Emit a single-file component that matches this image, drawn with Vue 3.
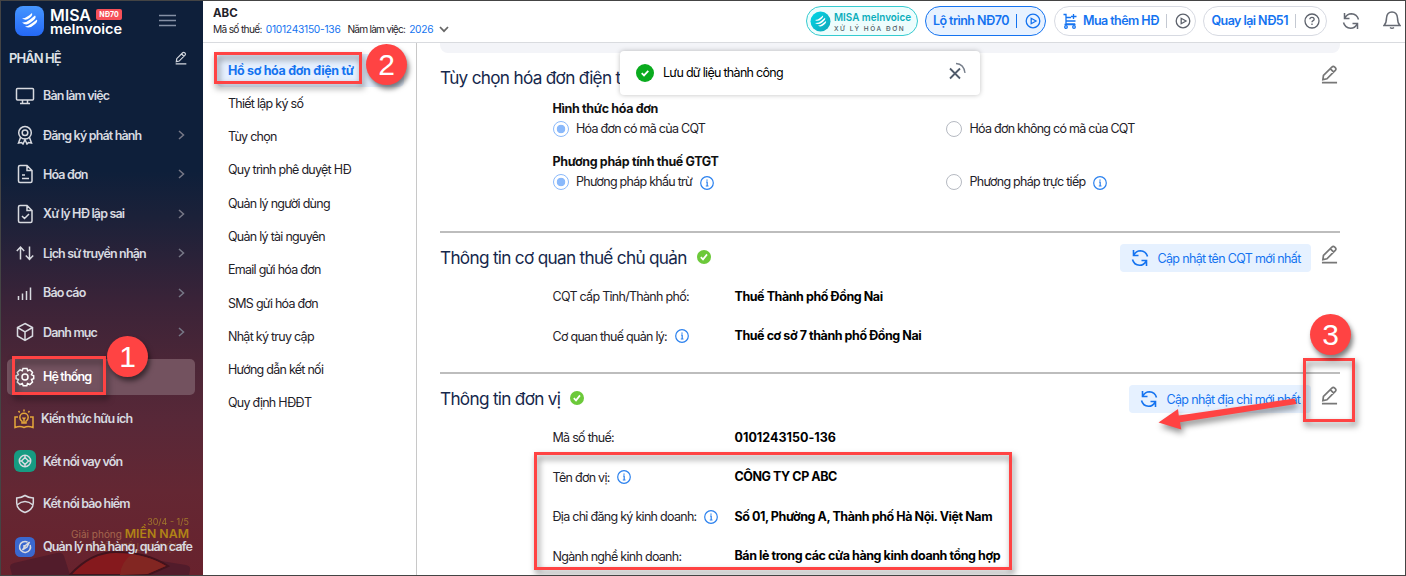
<template>
  <div class="app">
    <!-- Menu bên trái -->
    <aside class="sidebar">
      <div class="festival">
        <svg class="festival-art" width="202" height="30" viewBox="0 0 202 30">
          <path d="M11 30 L9 22 Q9 19 13 18 L56 8 Q61 7 63 11 L69 30 Z M160 16 L185 20 Q190 21 189 25 L188 30 H150 Z" fill="#521c2b" />
          <path d="M69 30 Q90 7 115 7 Q145 7 167 21 L147 30 Z" fill="#85191d" stroke="#42131d" stroke-width="2" />
          <path d="M119 30 Q120 17 131 9 Q150 12 165 21 L146 29 Z" fill="#822622" />
        </svg>
        <span class="fest-date">30/4 - 1/5</span>
        <span class="fest-main">Giải phóng <b>MIỀN NAM</b></span>
        <span class="fest-sub">QUỐC TẾ LAO ĐỘNG</span>
      </div>

      <div class="brand">
        <svg width="29" height="30" viewBox="0 0 29 30">
          <defs>
            <linearGradient id="brandBg" x1="0" y1="0" x2="0" y2="1">
              <stop offset="0" stop-color="#4596ff" />
              <stop offset="1" stop-color="#2468f6" />
            </linearGradient>
          </defs>
          <rect width="29" height="30" rx="8" fill="url(#brandBg)" />
          <path d="M7 12.5 Q10 12.500 14 9.500 L17 7 Q18 9.500 14.500 12 Q11 15 7 12.500 Z M7 16.500 Q11 17 15 13.500 L20 9.500 Q22 11.500 18 14.800 L15 17 Q11 20 7 16.500 Z M10 20.500 Q13 20.500 17 17.300 L22 13.500 Q23 16 19.500 18.500 Q15 23 10 20.500 Z" fill="#fff" />
        </svg>
        <svg class="brand-text" width="74" height="34" viewBox="0 0 74 34">
          <text x="0" y="15" font-size="16" textLength="41" lengthAdjust="spacingAndGlyphs">MISA</text>
          <text x="0" y="28" font-size="13.5" textLength="72" lengthAdjust="spacingAndGlyphs">meInvoice</text>
        </svg>
        <span class="brand-badge">NĐ70</span>
        <svg class="burger" width="17" height="13" viewBox="0 0 17 13">
          <path d="M0 1.500h17M0 6.500h17M0 11.500h17" stroke="#8590a5" stroke-width="1.500" />
        </svg>
      </div>

      <div class="side-title">
        <span>PHÂN HỆ</span>
        <svg width="12" height="14" viewBox="0 0 18 20" fill="none" stroke="#d5d9e0" stroke-width="1.800">
          <path :d="pencil" />
        </svg>
      </div>

      <div
        v-for="item in mainMenu"
        :key="item.text"
        :class="['side-item', { current: item.current }]"
      >
        <svg class="side-icon" width="20" height="20" viewBox="0 0 20 20">
          <path v-for="d in item.icon" :key="d" :d="d" />
        </svg>
        <span class="side-text">{{ item.text }}</span>
        <svg v-if="item.arrow" class="side-arrow" width="7" height="10" viewBox="0 0 7 10">
          <path d="M1 1l4.500 4L1 9" />
        </svg>
      </div>

      <div class="side-item extra">
        <svg class="side-icon gold" width="20" height="20" viewBox="0 0 20 20">
          <path d="M8 14v-1.700Q5.800 11 5.800 8.500a4.200 4.200 0 0 1 8.400 0q0 2.500-2.200 3.800V14zM8.500 8.500L10 10l1.500-1.500M10 10v4M10 .5V2.500M4.500 2l1.200 1.500M15.500 2l-1.200 1.500M4 8H1v10.500q5-1.800 9 0 4-1.800 9 0V8h-3" />
        </svg>
        <span class="side-text shift">Kiến thức hữu ích</span>
      </div>
      <div class="side-item extra">
        <svg class="side-icon wide" width="22" height="22" viewBox="0 0 22 22">
          <rect width="22" height="22" rx="6" fill="#169b82" stroke="none" />
          <circle cx="11" cy="11" r="5.700" />
          <path d="M11 7.500l3.500 3.500-3.500 3.500L7.500 11zM11 5.300v2.200M11 14.500v2.200M5.300 11h2.200M14.500 11h2.200" />
        </svg>
        <span class="side-text">Kết nối vay vốn</span>
      </div>
      <div class="side-item extra">
        <svg class="side-icon" width="20" height="20" viewBox="0 0 20 20">
          <path d="M10 1.500q4 2.600 8.300 2.600v5q0 6.500-8.300 9.400-8.300-2.900-8.300-9.400v-5q4.300 0 8.300-2.600zM2 11q4-3.500 8-3.500t8 3.500" />
        </svg>
        <span class="side-text">Kết nối bảo hiểm</span>
      </div>
      <div class="side-item extra">
        <svg class="side-icon" width="20" height="20" viewBox="0 0 20 20">
          <rect width="20" height="20" rx="5.500" fill="#3a68cf" stroke="none" />
          <path d="M12.500 5a5.500 5.500 0 1 0 2.700 3M7.500 13l3-4.500 4-3.500-2.500 5zM9 8v3" />
        </svg>
        <span class="side-text">Quản lý nhà hàng, quán cafe</span>
      </div>
    </aside>

    <div class="page">
      <!-- Thanh trên cùng -->
      <header class="topbar">
        <div class="company">
          <b>ABC</b>
          <div class="company-info">
            <span>Mã số thuế:</span><span class="blue">0101243150-136</span>
            <span class="year">Năm làm việc:</span><span class="blue">2026</span>
            <svg width="10" height="7" viewBox="0 0 10 7"><path d="M1 1l4 4.200L9 1" fill="none" stroke="#666" stroke-width="1.700" /></svg>
          </div>
        </div>
        <div class="tools">
          <div class="pill pill-logo">
            <svg width="112" height="29" viewBox="0 0 112 29">
              <defs>
                <linearGradient id="miniBg" x1="0" y1="0" x2="1" y2="1">
                  <stop offset="0" stop-color="#00d8e8" />
                  <stop offset="1" stop-color="#13a5b8" />
                </linearGradient>
              </defs>
              <circle cx="14.500" cy="14.500" r="10" fill="url(#miniBg)" />
              <path d="M9 13q3 0 5-2l3-2.500q.7 1.500-2 3.800-3 2.700-6 .7zM9 16q4 .3 6.500-2.300l3.500-2.900q1 1.700-2.500 4.400Q12 18.500 9 16zM12 18.800q3-.5 4.500-2l3.500-2.800q.7 1.500-2 3.800-3 2.700-6 1z" fill="#fff" />
              <text x="28" y="14.200" class="mini-name" textLength="77" lengthAdjust="spacingAndGlyphs">MISA meInvoice</text>
              <text x="28" y="23.500" class="mini-sub" textLength="69">XỬ LÝ HÓA ĐƠN</text>
            </svg>
          </div>
          <div class="pill pill-route">
            <span>Lộ trình NĐ70</span><i></i>
            <svg width="16" height="16" viewBox="0 0 16 16"><circle cx="8" cy="8" r="6.800" /><path d="M6.200 5.300v5.400L11 8z" /></svg>
          </div>
          <div class="pill pill-buy">
            <svg class="cart" width="15" height="16" viewBox="0 0 15 16">
              <path d="M.5 1.500H3v9.500h9M3 4.500h5M3 8h9.500M10.500 1v5M8 3.500h5.500M1.500 11.500h11" />
              <circle cx="3" cy="14" r="1.300" /><circle cx="11" cy="14" r="1.300" />
            </svg>
            <span>Mua thêm HĐ</span><i></i>
            <svg class="grey" width="16" height="16" viewBox="0 0 16 16"><circle cx="8" cy="8" r="6.800" /><path d="M6.200 5.300v5.400L11 8z" /></svg>
          </div>
          <div class="pill pill-back">
            <span>Quay lại NĐ51</span><i></i>
            <svg class="grey" width="16" height="16" viewBox="0 0 16 16"><circle cx="8" cy="8" r="7" /><path d="M5.800 6.300q.2-2 2.200-2t2.200 1.800q0 1.200-1.300 1.800-.9.500-.9 1.400M8 10.500v1.400" /></svg>
          </div>
          <svg class="tool-icon" width="18" height="18" viewBox="0 0 18 18"><path :d="refresh" /></svg>
          <svg class="tool-icon bell" width="18" height="19" viewBox="0 0 18 19">
            <path d="M1 14.500q2.500-2.500 2.500-7.500Q4 1 9 1t5.500 6q0 5 2.500 7.500zM7 16.500q2 1.600 4 0" />
          </svg>
        </div>
      </header>

      <div class="body">
        <nav class="subnav">
          <div
            v-for="(name, i) in subMenu"
            :key="name"
            :class="['sub-item', { active: i === 0 }]"
          >{{ name }}</div>
        </nav>

        <main class="content">
          <div class="grey-strip"></div>

          <section class="options">
            <div class="sec-head">
              <h2>Tùy chọn hóa đơn điện tử</h2>
              <svg class="edit" width="17" height="19" viewBox="0 0 18 20"><path :d="pencil" /></svg>
            </div>
            <div v-for="g in groups" :key="g.title" class="group">
              <b>{{ g.title }}</b>
              <div class="radios">
                <label v-for="(o, i) in g.options" :key="o.text">
                  <span :class="['radio', { checked: i === 0 }]"></span>
                  <span>{{ o.text }}</span>
                  <svg v-if="o.info" class="info" width="14" height="14" viewBox="0 0 14 14"><circle cx="7" cy="7" r="6.300" /><path :d="infoMark" /></svg>
                </label>
              </div>
            </div>
          </section>

          <section v-for="s in sections" :key="s.title" class="info-sec">
            <div class="sec-head">
              <h2>{{ s.title }}</h2>
              <svg class="ok" width="14" height="14" viewBox="0 0 14 14">
                <circle cx="7" cy="7" r="7" fill="#6cc93a" /><path d="M3.800 7.200L6 9.400l4-5" />
              </svg>
              <button :class="['update', s.cls]">
                <svg width="18" height="18" viewBox="0 0 18 18"><path :d="refresh" /></svg>
                <span>{{ s.button }}</span>
              </button>
              <svg class="edit" width="17" height="19" viewBox="0 0 18 20"><path :d="pencil" /></svg>
            </div>
            <div v-for="r in s.rows" :key="r.label" class="row">
              <span class="label">
                {{ r.label }}
                <svg v-if="r.info" class="info" width="14" height="14" viewBox="0 0 14 14"><circle cx="7" cy="7" r="6.300" /><path :d="infoMark" /></svg>
              </span>
              <b :class="{ digits: r.digits }">{{ r.value }}</b>
            </div>
          </section>
        </main>
      </div>
    </div>

    <!-- Thông báo lưu thành công -->
    <div class="toast">
      <svg width="18" height="18" viewBox="0 0 18 18">
        <circle cx="9" cy="9" r="9" fill="#0aab1e" /><path d="M5.700 9.200l2.300 2.200 4.300-4.500" fill="none" stroke="#fff" stroke-width="1.800" />
      </svg>
      <span>Lưu dữ liệu thành công</span>
      <svg class="close" width="18" height="18" viewBox="0 0 18 18">
        <path d="M2 6.500l10 10M12 6.500l-10 10" stroke="#505b6b" stroke-width="1.800" />
        <path d="M8 1.500q8 .5 9 9.500" stroke="#777f8b" stroke-width="1.300" fill="none" />
      </svg>
    </div>

    <!-- Các bước hướng dẫn -->
    <div class="mark mark-1"></div>
    <div class="mark mark-2"></div>
    <div class="mark mark-3"></div>
    <div class="mark mark-4"></div>
    <svg class="arrow" width="150" height="45" viewBox="0 0 150 45">
      <path d="M3.500 27.500L23 14l.8 6.500L139.500 3.500l2 5.500-116.500 18.300 1.300 7.200z" fill="#ff4343" />
    </svg>
    <div class="step step-1">1</div>
    <div class="step step-2">2</div>
    <div class="step step-3">3</div>
  </div>
</template>

<script setup>
// Icon dùng chung
const pencil = 'M2 15.500l.6-4.500L11.500 2.200q1.500-1.400 3 0l.6.6q1.400 1.400 0 2.900L6.300 14.600zM10 4l3.700 3.700M1 18.700h16'
const refresh = 'M2.500 1v5.500h5M15.500 17v-5.500h-5M2.800 6.200Q5 1.700 9.500 1.700q5.500.3 7 5.800M15.200 11.800Q13 16.300 8.500 16.300q-5.500-.3-7-5.800'
const infoMark = 'M6 6h1.200v4M5.800 10h2.700M7 3.500v1.200'

const mainMenu = [
  { text: 'Bàn làm việc', icon: ['M2.500 2.500h15q1 0 1 1v9.500q0 1-1 1h-15q-1 0-1-1V3.500q0-1 1-1zM7.500 14v3M12.500 14v3M5 17.500h10'] },
  { text: 'Đăng ký phát hành', arrow: true, icon: ['M10 1.500a6.300 6.300 0 1 1 0 12.600 6.300 6.300 0 0 1 0-12.600z', 'M10 5a2.800 2.800 0 1 1 0 5.600A2.800 2.800 0 0 1 10 5z', 'M5.500 12.500L3.500 18l3-.5 1.500 1.500 2-4.500 2 4.500 1.500-1.500 3 .5-2-5.500'] },
  { text: 'Hóa đơn', arrow: true, icon: ['M5 1.500h7l5 5V17q0 1.500-1.500 1.500H5Q3.500 18.500 3.500 17V3Q3.500 1.500 5 1.500zM12 1.500v5h5M7 11h3M7 14.500h7'] },
  { text: 'Xử lý HĐ lập sai', arrow: true, icon: ['M5 1.500h7l5 5V17q0 1.500-1.500 1.500H5Q3.500 18.500 3.500 17V3Q3.500 1.500 5 1.500zM12 1.500v5h5M7 12l2.500 2.500 4.500-4.500'] },
  { text: 'Lịch sử truyền nhận', arrow: true, icon: ['M5.500 16.500v-12M1.800 8l3.700-4 3.700 4M14.500 3.500v12.500M10.800 12.500l3.700 4 3.700-4'] },
  { text: 'Báo cáo', arrow: true, icon: ['M3.500 13v4M7.500 10.500V17M11.500 8v9M15.500 4.500V17'] },
  { text: 'Danh mục', arrow: true, icon: ['M10 1.500l7.500 4v8.500L10 18.500 2.500 14V5.500zM2.500 5.500L10 10l7.500-4.500M10 10v8.500'] },
  { text: 'Hệ thống', current: true, icon: ['M8 1.500h4l.7 2.200 2.300-.9 2.500 2.700-1 2.200 2.200 1v3l-2.200.8 1 2.500-2.700 2.500-2.300-1-.7 2.200H8.200l-.9-2.200-2.300 1L2.300 15l1-2.500-2.200-.8v-3l2.200-1-1-2.200L5 2.800l2.300.9z', 'M10 7a3 3 0 1 1 0 6 3 3 0 0 1 0-6z'] }
]

const subMenu = [
  'Hồ sơ hóa đơn điện tử',
  'Thiết lập ký số',
  'Tùy chọn',
  'Quy trình phê duyệt HĐ',
  'Quản lý người dùng',
  'Quản lý tài nguyên',
  'Email gửi hóa đơn',
  'SMS gửi hóa đơn',
  'Nhật ký truy cập',
  'Hướng dẫn kết nối',
  'Quy định HĐĐT'
]

const groups = [
  {
    title: 'Hình thức hóa đơn',
    options: [{ text: 'Hóa đơn có mã của CQT' }, { text: 'Hóa đơn không có mã của CQT' }]
  },
  {
    title: 'Phương pháp tính thuế GTGT',
    options: [{ text: 'Phương pháp khấu trừ', info: true }, { text: 'Phương pháp trực tiếp', info: true }]
  }
]

const sections = [
  {
    title: 'Thông tin cơ quan thuế chủ quản',
    button: 'Cập nhật tên CQT mới nhất',
    cls: 'w191',
    rows: [
      { label: 'CQT cấp Tỉnh/Thành phố:', value: 'Thuế Thành phố Đồng Nai' },
      { label: 'Cơ quan thuế quản lý:', value: 'Thuế cơ sở 7 thành phố Đồng Nai', info: true }
    ]
  },
  {
    title: 'Thông tin đơn vị',
    button: 'Cập nhật địa chỉ mới nhất',
    cls: 'w182',
    rows: [
      { label: 'Mã số thuế:', value: '0101243150-136', digits: true },
      { label: 'Tên đơn vị:', value: 'CÔNG TY CP ABC', info: true },
      { label: 'Địa chỉ đăng ký kinh doanh:', value: 'Số 01, Phường A, Thành phố Hà Nội. Việt Nam', info: true },
      { label: 'Ngành nghề kinh doanh:', value: 'Bán lẻ trong các cửa hàng kinh doanh tổng hợp' }
    ]
  }
]
</script>

<style>
body { margin: 0; overflow: hidden; }
</style>

<style scoped>
.app {
  position: relative;
  display: flex;
  box-sizing: border-box;
  width: 1406px;
  height: 576px;
  border: 1px solid #444;
  overflow: hidden;
  background: #fff;
  color: #1f2229;
  font-family: Inter, "Liberation Sans", sans-serif;
  font-size: 13px;
  letter-spacing: -0.7px;
  white-space: nowrap;
}
svg { flex: none; display: block; }

/* menu trái */
.sidebar {
  position: relative;
  width: 202px;
  flex: none;
  background: linear-gradient(#0e1f3a 0, #0e1f3a 170px, #1b2139 215px, #3a2338 300px, #4b2637 360px, #582838 420px, #642733 490px, #68222d 574px);
}
.brand {
  position: relative;
  display: flex;
  align-items: flex-start;
  height: 41px;
  padding: 5px 0 0 14px;
  box-sizing: border-box;
}
.brand-text { margin-left: 6px; overflow: visible; font-weight: 600; letter-spacing: 0; fill: #fff; }
.brand-badge {
  position: absolute;
  left: 95px;
  top: 8px;
  width: 26px;
  height: 11px;
  border-radius: 2px;
  background: #f65058;
  color: #fff;
  font-size: 7px;
  font-weight: 700;
  line-height: 11px;
  letter-spacing: 0;
  text-align: center;
}
.burger { margin: 8px 0 0 35px; }
.side-title {
  display: flex;
  align-items: center;
  justify-content: space-between;
  height: 32px;
  padding: 0 16px 2px 8px;
  color: #dfe2e7;
  font-weight: 560;
  letter-spacing: -0.95px;
}
.side-item {
  position: relative;
  display: flex;
  align-items: center;
  height: 39.4px;
  padding-left: 14px;
  color: #d8dae0;
  font-weight: 560;
  font-size: 12.5px;
  letter-spacing: -0.85px;
}
.side-item.current {
  height: 36px;
  margin: 7px 8px 2.5px 6px;
  padding-left: 8px;
  border-radius: 5px;
  background: #73525f;
  color: #fff;
}
.side-item.extra { height: 42.7px; }
.side-icon { fill: none; stroke: currentColor; stroke-width: 1.5; }
.side-icon.gold { stroke: #e4a63a; margin-left: -1px; }
.side-icon.wide { margin: 0 -1px; }
.side-text { margin-left: 8px; }
.side-text.shift { margin-left: 7px; }
.side-arrow { position: absolute; right: 18px; fill: none; stroke: #777887; stroke-width: 1.5; }
.festival { position: absolute; inset: auto 0 0 0; height: 64px; color: #b08a2b; letter-spacing: 0; }
.festival-art { position: absolute; left: 0; bottom: 0; }
.festival span { position: absolute; right: 14px; }
.fest-date { top: 5px; font-size: 9px; opacity: .8; }
.fest-main { top: 15px; font-size: 10px; color: #a5654d; }
.fest-main b { font-size: 12.3px; color: #b08316; font-weight: 600; }
.fest-sub { top: 30px; font-size: 10px; opacity: .35; }

/* thanh trên */
.page { flex: 1; min-width: 0; display: flex; flex-direction: column; }
.topbar {
  display: flex;
  justify-content: space-between;
  height: 41px;
  border-bottom: 1px solid #d9dbdf;
}
.company { padding: 4px 0 0 10px; font-size: 11.5px; line-height: 16px; letter-spacing: 0; }
.company-info { display: flex; align-items: center; font-size: 10.2px; letter-spacing: -0.7px; line-height: 17px; }
.company-info svg { margin-left: 6px; }
.blue { color: #1473f0; margin-left: 4px; letter-spacing: -0.25px; }
.year { margin-left: 7px; letter-spacing: -0.8px; }
.tools { display: flex; align-items: flex-start; padding: 5px 4px 0 0; }
.pill {
  display: flex;
  align-items: center;
  box-sizing: border-box;
  height: 30px;
  margin-right: 8px;
  border: 1px solid #d7dae2;
  border-radius: 15px;
  color: #1473f0;
  font-size: 12.5px;
  font-weight: 560;
  letter-spacing: -0.57px;
}
.pill span { margin-top: -1px; }
.pill i { width: 1px; height: 14px; margin: 0 8px 0 7px; background: #c4c9d2; }
.pill svg { fill: none; stroke: currentColor; stroke-width: 1.3; }
.pill svg.grey { color: #5d626c; }
.pill-logo { width: 112px; margin-right: 7px; border-color: #35cbd0; background: #edfdfd; }
.pill-logo svg { stroke: none; margin-left: -1px; overflow: visible; }
.mini-name { fill: #0aaebb; font: 600 11px Inter, sans-serif; letter-spacing: 0; }
.mini-sub { fill: #4d5b63; font: 500 6.5px Inter, sans-serif; }
.pill-route { width: 121px; padding-left: 7px; border-color: #1473f0; background: #e8f2ff; }
.pill-route i { background: #1473f0; }
.pill-buy { width: 142px; padding-left: 8px; margin-right: 7px; }
.pill-buy .cart { margin-right: 5px; }
.pill-back { width: 124px; padding-left: 7.5px; margin-right: 15px; }
.tool-icon { margin-top: 6px; fill: none; stroke: #666a73; stroke-width: 1.5; }
.bell { margin-left: 23px; margin-top: 5px; }

/* menu con */
.body { display: flex; flex: 1; min-height: 0; }
.subnav { width: 214px; flex: none; box-sizing: border-box; padding-top: 10.5px; border-right: 1px solid #c8c8c8; }
.sub-item { height: 33.3px; line-height: 33px; padding-left: 11px; margin: 0 12px 0 14px; font-size: 12.5px; letter-spacing: -0.73px; }
.sub-item.active { background: #e5f0ff; border-radius: 5px; color: #1473f0; font-weight: 700; letter-spacing: -0.32px; }

/* nội dung */
.content { width: 900px; margin-left: 23px; }
.grey-strip { height: 10px; background: #f3f4f8; border-radius: 0 0 8px 8px; }
.options { height: 178px; }
.sec-head { display: flex; align-items: center; height: 40px; padding-top: 4px; }
h2 { margin: 0; color: #16284c; font-size: 17.2px; font-weight: 400; letter-spacing: -0.7px; }
.edit { margin-left: auto; margin-right: 2px; margin-top: -6px; fill: none; stroke: #777; stroke-width: 1.8; }
.group { height: 53px; padding-left: 112.5px; font-size: 12.5px; }
.group b, .row b { font-weight: 700; color: #111; }
.group b { display: block; padding-top: 2px; line-height: 20px; letter-spacing: -0.34px; }
.radios { display: grid; grid-template-columns: 393.5px 1fr; }
.radios label { display: flex; align-items: center; height: 19px; letter-spacing: -0.73px; }
.radio {
  width: 16px;
  height: 16px;
  box-sizing: border-box;
  margin-right: 7.5px;
  border: 1px solid #b6bac2;
  border-radius: 50%;
}
.radio.checked { border-color: #8ab9fb; background: radial-gradient(circle, #8ab9fb 4px, #fff 4.6px); }
.info { margin-left: 7.5px; fill: none; stroke: #2a80ee; stroke-width: 1.2; position: relative; top: 1px; }
.info-sec { border-top: 2px solid #bdbdbd; margin-bottom: 16px; }
.ok { margin-left: 10px; margin-top: -1px; }
.ok path { fill: none; stroke: #fff; stroke-width: 1.7; }
.update {
  display: flex;
  align-items: center;
  box-sizing: border-box;
  height: 28px;
  margin-left: auto;
  margin-top: 2px;
  padding: 0 0 0 10.5px;
  border: 0;
  border-radius: 4px;
  background: #e6f1ff;
  color: #1473f0;
  font: inherit;
  letter-spacing: -0.66px;
  font-size: 12.5px;
}
.update svg { fill: none; stroke: currentColor; stroke-width: 1.6; margin-right: 9px; }
.update + .edit { margin-left: 10px; }
.w191 { width: 191px; }
.w182 { width: 182px; }
.row { display: flex; align-items: center; height: 39.5px; padding-left: 112.5px; font-size: 12.5px; }
.row .label { display: flex; align-items: center; width: 182px; letter-spacing: -0.71px; }
.row .info { top: 0; }
.row b { color: #000; letter-spacing: -0.43px; margin-top: -1px; }
.row b.digits { letter-spacing: 0.03px; }

.toast {
  position: absolute;
  left: 619px;
  top: 50px;
  display: flex;
  align-items: center;
  box-sizing: border-box;
  width: 360px;
  height: 43.5px;
  padding: 0 14px 0 16px;
  border-radius: 4px;
  background: #fff;
  color: #000;
  font-size: 12.5px;
  box-shadow: 0 0 5px rgba(0, 0, 0, .25);
}
.toast span { margin-left: 9px; }
.close { margin-left: auto; margin-top: -4px; }

/* khung đỏ, số bước */
.mark { position: absolute; box-sizing: border-box; border: 3px solid #ff4343; filter: drop-shadow(2px 4px 3px rgba(0, 0, 0, .5)); }
.mark-1 { left: 11px; top: 355px; width: 94px; height: 39px; }
.mark-2 { left: 213px; top: 51px; width: 148px; height: 32px; }
.mark-3 { left: 1302px; top: 357px; width: 52px; height: 64px; }
.mark-4 { left: 533px; top: 451px; width: 478px; height: 118px; }
.arrow { position: absolute; left: 1154px; top: 394px; filter: drop-shadow(2px 4px 3px rgba(0, 0, 0, .45)); }
.step {
  position: absolute;
  width: 41px;
  height: 41px;
  border-radius: 50%;
  background: #ff4343;
  color: #fff;
  font: 30px/41px "Liberation Sans", sans-serif;
  letter-spacing: 0;
  text-align: center;
  box-shadow: 2px 4px 5px rgba(0, 0, 0, .5);
}
.step-1 { left: 106px; top: 335px; }
.step-2 { left: 365px; top: 43px; }
.step-3 { left: 1309px; top: 313px; }
</style>
